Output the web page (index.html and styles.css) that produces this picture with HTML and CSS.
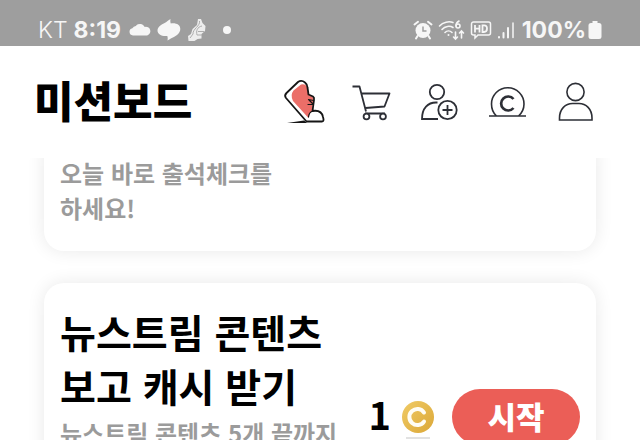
FILE: index.html
```html
<!DOCTYPE html>
<html lang="ko">
<head>
  <meta charset="UTF-8" />
  <meta name="viewport" content="width=device-width, initial-scale=1.0"/>
  <title>미션보드</title>
  <link rel="stylesheet" href="styles.css">
</head>
<body>

<div class="status-bar">
  <div class="status-left">
    <span class="carrier">KT</span>
    <span class="clock">8:19</span>
    <svg class="icon-cloud" width="22" height="22" viewBox="0 0 22 22" fill="#f6f6f6">
      <path d="M4 16.500a3.700 3.700 0 0 1-.6-7.300A4.300 4.300 0 0 1 6.800 7 5.200 5.200 0 0 1 15.700 8a4 4 0 0 1 2.500 8.500z"/>
    </svg>
    <svg class="icon-swirl" width="24" height="24" viewBox="0 0 24 24" fill="#f6f6f6">
      <path d="M13.500 1c-.3 1.800-.2 3.200.3 4.500 5.500-.8 9.500 1.400 9.500 5.500 0 5-5.500 7.500-9.500 9.500-1 .7-2 1.300-3.300 2 .3-1.700.3-3-.2-4.500C5 18.600.5 16.600.5 12.600.5 8 5.500 6 9 4.200 10.600 3.200 11.800 2 13.500 1z"/>
    </svg>
    <svg class="icon-step" width="20" height="24" viewBox="0 0 20 24">
      <path d="M11 1h3l1.500 4 3 3-.5 5-3.500 3v4.500l-4 .5-3 2H1.500l-.5-5 3-2 1.500-5L10 7z" fill="#ededed"/>
      <path d="M12.500 3c1 5-7 8-6.500 13l-3 4M15 8c-5 1-6 5-5 9M11 13.500h6M10 17h5" fill="none" stroke="#adadad"/>
    </svg>
    <span class="dot"></span>
  </div>
  <div class="status-right">
    <svg width="20" height="20" viewBox="0 0 20 20">
      <circle cx="10" cy="10.500" r="7.500" fill="#f6f6f6"/>
      <path d="M1.500 4.500L5 1.800M18.500 4.500L15 1.800M4.500 16L3 18.500M15.500 16l1.500 2.500" stroke="#f6f6f6" stroke-width="2" stroke-linecap="round"/>
      <path d="M10 6.500v4.500h3.500" fill="none" stroke="#9e9e9e" stroke-width="1.500"/>
    </svg>
    <svg width="27" height="22" viewBox="0 0 27 22" fill="none" stroke="#f6f6f6" stroke-width="1.600" stroke-linecap="round">
      <path d="M1.500 7C5 3 11 2 15 3.500M4 10.500c3-3.500 8-4 11-2M7 13.500c2-2 5-2 7 0"/>
      <circle cx="10.500" cy="16" r="1" fill="#f6f6f6" stroke="none"/>
      <path d="M21 2c-2 1-3 3-3 5"/>
      <circle cx="20" cy="7" r="2"/>
      <path d="M17.500 13v7M15.500 18l2 2 2-2M23.500 19v-7M21.500 14l2-2 2 2"/>
    </svg>
    <svg width="22" height="20" viewBox="0 0 22 20" fill="none" stroke="#f6f6f6" stroke-width="1.500">
      <path d="M3.500 2h15a2 2 0 0 1 2 2v9a2 2 0 0 1-2 2H8l-3 3v-3H3.500a2 2 0 0 1-2-2V4a2 2 0 0 1 2-2z"/>
      <path d="M5 5v7.500M9.500 5v7.500M5 8.700h4.500M12.500 5.300v6.700H14q3 0 3-3.400T14 5.300z" stroke-width="1.800"/>
    </svg>
    <svg class="icon-signal" width="18" height="20" viewBox="0 0 18 20" fill="none" stroke="#f6f6f6" stroke-width="2" stroke-linecap="round">
      <path d="M2 17v.5M6.500 13v4.500M11 8v9.500"/>
      <path d="M16 3v14.500" stroke-width="1.500"/>
    </svg>
    <span class="percent">100%</span>
    <svg class="icon-battery" width="14" height="20" viewBox="0 0 14 20" fill="#f6f6f6">
      <path d="M4.500 1h5v2H11a2.500 2.500 0 0 1 2.500 2.500v11A2.500 2.500 0 0 1 11 19H3a2.500 2.500 0 0 1-2.500-2.500v-11A2.500 2.500 0 0 1 3 3h1.500z"/>
    </svg>
  </div>
</div>

<header class="app-header">
  <h1>미션보드</h1>
  <nav class="menu">
    <a href="#" aria-label="걷기">
      <svg width="44" height="48" viewBox="0 0 44 48">
        <path d="M13.500 12.500L21 6.500q4-1 6 2l1.500 8.500q3 .5 5 3l-1.500 12.500q-3 3-3.500 7.500L13 23q-3-6 .5-10.500z" fill="#eb6e68"/>
        <path d="M6 20q-2-2.500.5-5L18 4q3.500-2.500 7 .5 2.500 2 2.500 5l1 7 4.500 2q1.500 1 1 3.500l-1.500 11c6-1 9.500 1 10.500 6 .7 2.500 1 4.500-1 4.500H26.500z" fill="none" stroke="#151515" stroke-width="1.800" stroke-linejoin="round"/>
        <path d="M33 33q-4 1-4.500 6M28.500 21.500l5 1M28 26.500h5M29 22l4 4" fill="none" stroke="#151515" stroke-width="1.200" stroke-linecap="round"/>
        <path d="M7 45l17-2.500 3 2.500z" fill="#151515"/>
      </svg>
    </a>
    <a href="#" aria-label="쇼핑">
      <svg width="40" height="48" viewBox="0 0 40 48" fill="none" stroke="#2d2f36" stroke-width="1.800">
        <path d="M.5 8.500h7l6.500 25M9.500 15.500h28l-5 13-19 1.500M13 35.500h20" stroke-linejoin="round"/>
        <circle cx="14.500" cy="38.500" r="2.900" fill="#fff"/>
        <circle cx="31" cy="38.500" r="2.900" fill="#fff"/>
      </svg>
    </a>
    <a href="#" aria-label="친구 초대">
      <svg width="40" height="48" viewBox="0 0 40 48" fill="none" stroke="#2d2f36" stroke-width="1.800">
        <circle cx="17" cy="14" r="7.200"/>
        <path d="M17.500 24.500H16C8 24.500 2 30 2 41h16"/>
        <circle cx="27.500" cy="32" r="9.200"/>
        <path d="M27.500 27v10M22.500 32h10"/>
      </svg>
    </a>
    <a href="#" aria-label="캐시">
      <svg width="40" height="48" viewBox="0 0 40 48" fill="none" stroke="#2d2f36" stroke-width="1.600">
        <path d="M1 38h37M8.500 38C4 34 3.500 30 3.500 26a16 16 0 0 1 32.500 0c0 4-1 8-5.500 12"/>
        <path d="M25.500 21a7 7 0 1 0 0 9" stroke-width="2.700"/>
      </svg>
    </a>
    <a href="#" aria-label="내 정보">
      <svg width="40" height="48" viewBox="0 0 40 48" fill="none" stroke="#2d2f36" stroke-width="1.600">
        <circle cx="19.500" cy="14" r="8.600"/>
        <path d="M3.500 42v-2c0-9 6-14.500 13-14.500h6.500C30 25.500 36 31 36 40v2z"/>
      </svg>
    </a>
  </nav>
</header>

<main class="mission-list">
  <section class="card">
    <p class="description">오늘 바로 출석체크를<br>하세요!</p>
  </section>

  <section class="card">
    <div class="card-text">
      <h2>뉴스트림 콘텐츠<br>보고 캐시 받기</h2>
      <p class="description">뉴스트림 콘텐츠 5개 끝까지</p>
    </div>
    <div class="reward">
      <span class="amount">1</span>
      <svg class="coin" width="34" height="40" viewBox="0 0 34 40">
        <defs>
          <linearGradient id="gold" x1="0" y1="0" x2="1" y2="1">
            <stop offset="0" stop-color="#f0cb66"/>
            <stop offset="1" stop-color="#dba737"/>
          </linearGradient>
        </defs>
        <circle cx="17" cy="17" r="16" fill="url(#gold)"/>
        <path d="M23 12.500a8 8 0 1 0 0 9" fill="none" stroke="#fffdf5" stroke-width="4" stroke-linecap="round"/>
        <path d="M5 38h24" stroke="#d8d8d8" stroke-width="1.500"/>
      </svg>
      <button class="start-btn" type="button">시작</button>
    </div>
  </section>
</main>

</body>
</html>
```
FILE: styles.css
```css
* { box-sizing: border-box; margin: 0; padding: 0; }

body {
  font-family: "Noto Sans CJK KR", sans-serif;
  background: #fff;
  color: #000;
  display: flex;
  flex-direction: column;
  height: 100vh;
  overflow: hidden;
}

svg {
  display: block;
  flex-shrink: 0;
  overflow: visible;
}

/* status bar */
.status-bar {
  display: flex;
  justify-content: space-between;
  flex-shrink: 0;
  height: 46px;
  padding: 14px 38px 0;
  background: #9e9e9e;
  color: #f6f6f6;
  font-family: Inter, sans-serif;
  font-size: 23px;
  line-height: 32px;
}

.status-left,
.status-right {
  display: flex;
  align-items: center;
  height: 32px;
}

.status-left { gap: 6px; }
.status-right { gap: 5px; }

.carrier { font-weight: 300; }

.clock,
.percent { font-weight: 700; }

.icon-cloud { margin-left: 2px; }

.icon-signal { margin-right: 2px; }

.icon-battery { margin-left: -3px; }

.dot {
  width: 8px;
  height: 8px;
  margin-left: 10px;
  border-radius: 50%;
  background: #f6f6f6;
}

/* header */
.app-header {
  display: flex;
  justify-content: space-between;
  align-items: center;
  flex-shrink: 0;
  height: 112px;
  padding: 0 44px 0 34px;
}

.app-header h1 {
  margin-bottom: 6px;
  font-size: 43px;
  font-weight: 900;
  line-height: 56px;
}

.menu {
  display: flex;
  gap: 28px;
}

/* missions */
.mission-list {
  flex: 1;
  display: flex;
  flex-direction: column;
  gap: 32px;
  padding: 0 44px;
  overflow: hidden;
}

.card {
  display: flex;
  justify-content: space-between;
  align-items: flex-start;
  flex-shrink: 0;
  padding: 21px 16px 26px;
  border-radius: 20px;
  background: #fff;
  box-shadow: 0 0 18px rgba(0, 0, 0, 0.09);
}

/* list is scrolled, the first card goes under the header */
.card:first-child { margin-top: -24px; }

.card h2 {
  margin-bottom: 3px;
  font-size: 39px;
  font-weight: 700;
  line-height: 54px;
}

.description {
  color: #9b9b9b;
  font-size: 24px;
  font-weight: 700;
  line-height: 35px;
}

.reward {
  display: flex;
  align-items: center;
  margin-top: 85px;
}

.amount {
  margin-right: 10px;
  margin-bottom: 6px;
  font-size: 38px;
  font-weight: 700;
  line-height: 40px;
}

.coin {
  margin-top: 6px;
  margin-right: 17px;
}

.start-btn {
  width: 128px;
  height: 56px;
  padding-bottom: 2px;
  border: none;
  border-radius: 28px;
  background: #eb5e57;
  color: #fff;
  font-family: inherit;
  font-size: 31px;
  font-weight: 900;
  line-height: 54px;
  cursor: pointer;
}
```
